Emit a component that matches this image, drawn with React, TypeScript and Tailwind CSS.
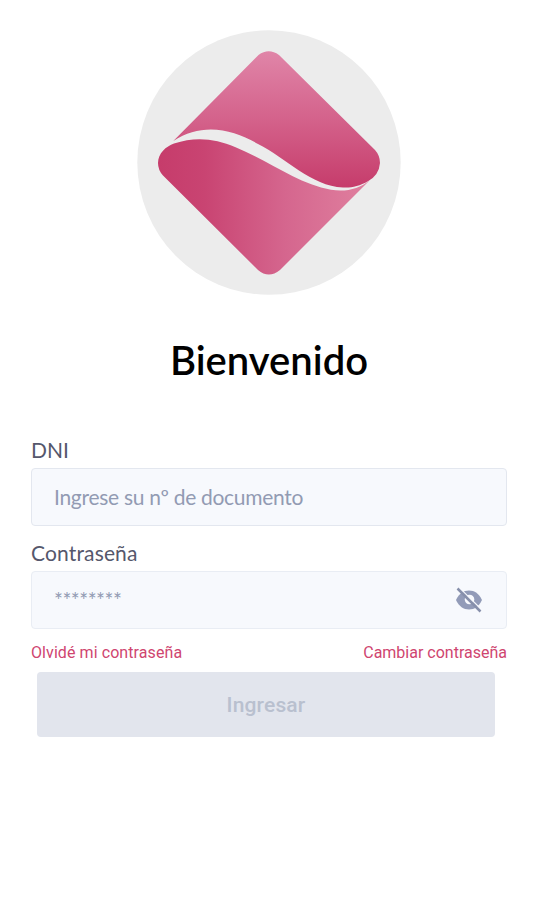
function EyeOff() {
  return (
    <svg className="h-[26px] w-[28px]" viewBox="0 0 28 26" aria-hidden="true">
      <path
        d="M1 13 C4 6.500 8.500 3.500 14 3.500 S24 6.500 27 13 C24 19.500 19.500 22.500 14 22.500 S4 19.500 1 13Z"
        fill="#929bb8"
      />
      <circle cx="14.5" cy="12.500" r="4.800" fill="#f7f9fd" />
      <path d="M4.200 0.700 L27 23" stroke="#f7f9fd" strokeWidth="1.300" />
      <path d="M2.500 1.500 L25.500 24.500" stroke="#8790ab" strokeWidth="2.500" />
    </svg>
  );
}

function Logo() {
  return (
    <svg className="h-[265px] w-[264px]" viewBox="0 0 264 265" aria-hidden="true">
      <defs>
        <linearGradient id="upper" x1="0" y1="0" x2="0" y2="1">
          <stop offset="0" stopColor="#e085a8" />
          <stop offset="0.5" stopColor="#d4628b" />
          <stop offset="1" stopColor="#c63c6b" />
        </linearGradient>
        <linearGradient id="lower" x1="0" y1="0" x2="1" y2="0">
          <stop offset="0" stopColor="#c63c6b" />
          <stop offset="0.22" stopColor="#c94472" />
          <stop offset="0.6" stopColor="#d5668e" />
          <stop offset="1" stopColor="#e0809f" />
        </linearGradient>
      </defs>
      <ellipse cx="132" cy="132.5" rx="131.7" ry="132.2" fill="#ececec" />
      <path
        fill="url(#lower)"
        d="M21 133 C21 123 29 116.500 37 113.500 C59 106 79 109 98 117 C132 131 161 154 194 159.800 C209 162.300 222 159 233 150 L143 240 Q131.700 249 121 240 L26 145.500 Q21 140 21 133Z"
      />
      <path
        fill="url(#upper)"
        d="M36.3 111 L121.5 25 Q131.7 17.5 142 25 L238 120 Q243 125.5 243 133 Q242 145 231.3 151 C222 156.500 214 158 206 157.500 C174 156 149 128 121 114 C96 99 65 92 36.3 111Z"
      />
    </svg>
  );
}

export default function App() {
  return (
    <main className="flex h-[900px] w-[534px] flex-col bg-white pt-[30px] font-['Lato',sans-serif]">
      <div className="ml-[137px] h-[264px]">
        <Logo />
      </div>
      <h1 className="mt-[42px] w-[538px] text-center text-[40px] leading-[48px] font-semibold text-black">
        Bienvenido
      </h1>

      <form className="mt-[53px] ml-[31px] flex w-[476px] flex-col">
        <label className="h-[31px] text-[21px] leading-[26px] text-[#55576c]">DNI</label>
        <div className="flex h-[58px] items-center rounded-[4px] border border-[#e3e7ef] bg-[#f7f9fd] pl-[22px] text-[21px] tracking-[-0.29px] text-[#929bb3]">
          Ingrese su nº de documento
        </div>
        <label className="mt-[13px] h-[32px] text-[21px] leading-[28px] tracking-[0.15px] text-[#55576c]">
          Contraseña
        </label>
        <div className="flex h-[58px] items-center justify-between rounded-[4px] border border-[#e9edf4] bg-[#f7f9fd] pr-[23px] pl-[22px] text-[21px] text-[#929bb3]">
          <span className="tracking-[-0.5px]">********</span>
          <EyeOff />
        </div>
        <div className="mt-[12px] flex h-[22px] justify-between font-['Roboto',sans-serif] text-[16px] leading-[23px] text-[#cf4570]">
          <span className="tracking-[0.08px]">Olvidé mi contraseña</span>
          <span>Cambiar contraseña</span>
        </div>
        <button
          type="button"
          className="mt-[9px] ml-[6px] h-[65px] w-[458px] rounded-[4px] bg-[#e2e5ed] pt-[2px] font-['Roboto',sans-serif] text-[21px] font-medium tracking-[0.15px] text-[#b9c0cf]"
        >
          Ingresar
        </button>
      </form>
    </main>
  );
}
